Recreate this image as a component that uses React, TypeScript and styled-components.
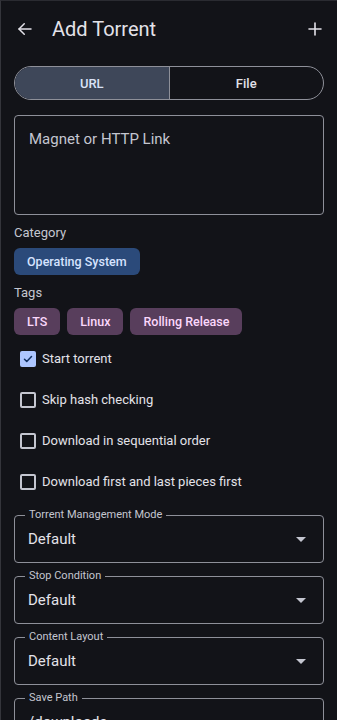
import styled, { createGlobalStyle } from 'styled-components';

const GlobalStyle = createGlobalStyle`
  html, body {
    margin: 0;
    padding: 0;
    background: #121318;
  }
  * {
    box-sizing: border-box;
  }
`;

const Page = styled.div`
  width: 337px;
  height: 720px;
  overflow: hidden;
  background: #121318;
  border-left: 1px solid #34353b;
  border-top: 1px solid #2a2b31;
  color: #e3e2e9;
  font-family: Roboto, 'Noto Sans', sans-serif;
`;

const TopBar = styled.header`
  height: 56px;
  display: flex;
  align-items: center;
  padding: 0 12px 0 14px;
  gap: 17px;
`;

const IconButton = styled.div`
  width: 20px;
  height: 20px;
  display: flex;
  align-items: center;
  justify-content: center;
  color: #e3e2e9;
`;

const Title = styled.h1`
  flex: 1;
  margin: 0;
  font-size: 20px;
  font-weight: 400;
  color: #e3e2e9;
`;

const Content = styled.main`
  padding: 9px 13px 0 13px;
  display: flex;
  flex-direction: column;
`;

const Segmented = styled.div`
  height: 34px;
  display: flex;
  border: 1px solid #8e9099;
  border-radius: 17px;
  overflow: hidden;
`;

const Segment = styled.div<{ $active?: boolean }>`
  flex: 1;
  display: flex;
  align-items: center;
  justify-content: center;
  font-size: 13px;
  font-weight: 500;
  color: ${(p) => (p.$active ? '#d9e2f7' : '#e3e2e9')};
  background: ${(p) => (p.$active ? '#3e4759' : 'transparent')};
  & + & {
    border-left: 1px solid #8e9099;
  }
`;

const TextArea = styled.div`
  margin-top: 15px;
  height: 100px;
  border: 1px solid #8e9099;
  border-radius: 4px;
  padding: 14px 14px;
  font-size: 15px;
  color: #c4c6d0;
`;

const SectionLabel = styled.div`
  margin-top: 10px;
  font-size: 13px;
  color: #c4c6d0;
  line-height: 16px;
`;

const ChipRow = styled.div`
  margin-top: 7px;
  display: flex;
  gap: 7px;
`;

const Chip = styled.div<{ $tone: 'blue' | 'purple' }>`
  height: 27px;
  padding: 0 13px;
  display: flex;
  align-items: center;
  border-radius: 6px;
  font-size: 12.5px;
  font-weight: 500;
  background: ${(p) => (p.$tone === 'blue' ? '#2b4a7a' : '#583e5c')};
  color: ${(p) => (p.$tone === 'blue' ? '#d6e3ff' : '#fbd7fb')};
`;

const CheckList = styled.div`
  margin-top: 3px;
  display: flex;
  flex-direction: column;
`;

const CheckRow = styled.label`
  height: 41px;
  display: flex;
  align-items: center;
  gap: 6px;
  padding-left: 6px;
  font-size: 13px;
  color: #e3e2e9;
`;

const Box = styled.span<{ $checked?: boolean }>`
  width: 16px;
  height: 16px;
  border-radius: 2px;
  display: flex;
  align-items: center;
  justify-content: center;
  border: ${(p) => (p.$checked ? 'none' : '2px solid #c4c6d0')};
  background: ${(p) => (p.$checked ? '#adc6ff' : 'transparent')};
`;

const Fields = styled.div`
  margin-top: 13px;
  display: flex;
  flex-direction: column;
  gap: 13px;
`;

const Field = styled.div`
  height: 48px;
  border: 1px solid #8e9099;
  border-radius: 4px;
  padding: 0 14px 0 13px;
  display: flex;
  align-items: center;
  position: relative;
`;

const FieldLabel = styled.span`
  position: absolute;
  top: -7px;
  left: 10px;
  padding: 0 4px;
  background: #121318;
  font-size: 11px;
  line-height: 12px;
  color: #c4c6d0;
`;

const FieldValue = styled.div`
  flex: 1;
  font-size: 15px;
  color: #e3e2e9;
`;

const Caret = styled.span`
  width: 0;
  height: 0;
  border-left: 5px solid transparent;
  border-right: 5px solid transparent;
  border-top: 5px solid #c4c6d0;
  margin-right: 3px;
`;

const ArrowBack = () => (
  <svg width="18" height="18" viewBox="0 0 24 24" fill="none" stroke="currentColor" strokeWidth="2" strokeLinecap="round" strokeLinejoin="round">
    <path d="M20 12H4" />
    <path d="M11 5l-7 7 7 7" />
  </svg>
);

const Plus = () => (
  <svg width="16" height="16" viewBox="0 0 24 24" fill="none" stroke="currentColor" strokeWidth="2.4" strokeLinecap="round">
    <path d="M12 3v18M3 12h18" />
  </svg>
);

const Check = () => (
  <svg width="12" height="12" viewBox="0 0 24 24" fill="none" stroke="#102f60" strokeWidth="3" strokeLinecap="round" strokeLinejoin="round">
    <path d="M5 12.5l4.5 4.5L19 7" />
  </svg>
);

const options = [
  { label: 'Start torrent', checked: true },
  { label: 'Skip hash checking', checked: false },
  { label: 'Download in sequential order', checked: false },
  { label: 'Download first and last pieces first', checked: false },
];

const selects = [
  { label: 'Torrent Management Mode', value: 'Default', caret: true },
  { label: 'Stop Condition', value: 'Default', caret: true },
  { label: 'Content Layout', value: 'Default', caret: true },
  { label: 'Save Path', value: '/downloads', caret: false },
];

export default function App() {
  return (
    <>
      <GlobalStyle />
      <Page>
        <TopBar>
          <IconButton>
            <ArrowBack />
          </IconButton>
          <Title>Add Torrent</Title>
          <IconButton>
            <Plus />
          </IconButton>
        </TopBar>
        <Content>
          <Segmented>
            <Segment $active>URL</Segment>
            <Segment>File</Segment>
          </Segmented>
          <TextArea>Magnet or HTTP Link</TextArea>
          <SectionLabel>Category</SectionLabel>
          <ChipRow>
            <Chip $tone="blue">Operating System</Chip>
          </ChipRow>
          <SectionLabel>Tags</SectionLabel>
          <ChipRow>
            <Chip $tone="purple">LTS</Chip>
            <Chip $tone="purple">Linux</Chip>
            <Chip $tone="purple">Rolling Release</Chip>
          </ChipRow>
          <CheckList>
            {options.map((o) => (
              <CheckRow key={o.label}>
                <Box $checked={o.checked}>{o.checked && <Check />}</Box>
                {o.label}
              </CheckRow>
            ))}
          </CheckList>
          <Fields>
            {selects.map((s) => (
              <Field key={s.label}>
                <FieldLabel>{s.label}</FieldLabel>
                <FieldValue>{s.value}</FieldValue>
                {s.caret && <Caret />}
              </Field>
            ))}
          </Fields>
        </Content>
      </Page>
    </>
  );
}
